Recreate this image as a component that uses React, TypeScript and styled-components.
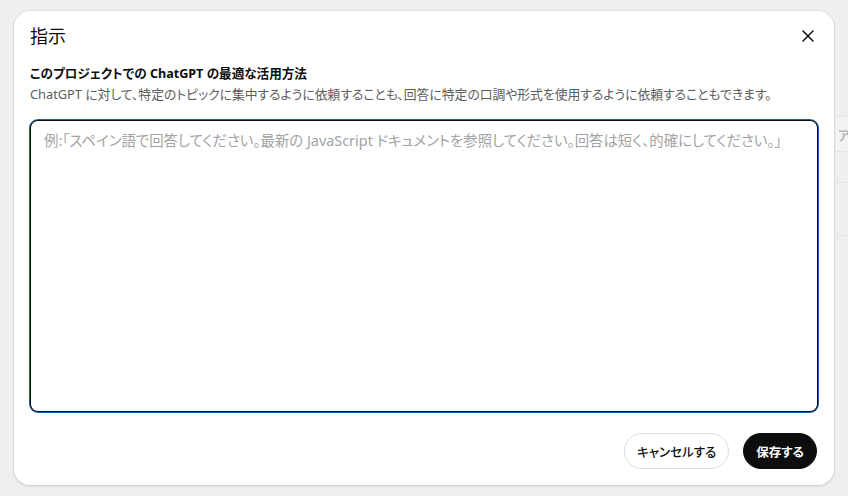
import React from 'react';
import styled, { createGlobalStyle } from 'styled-components';
import { X } from 'lucide-react';

const GlobalStyle = createGlobalStyle`
  html, body {
    margin: 0;
    padding: 0;
    background: #efefef;
  }
  body {
    font-family: 'Noto Sans', 'Noto Sans CJK JP', sans-serif;
    font-feature-settings: 'palt';
    color: #0d0d0d;
  }
`

const Backdrop = styled.div`
  position: relative;
  width: 848px;
  height: 496px;
  box-sizing: border-box;
  padding: 11px 14px;
  overflow: hidden;
`

// page content peeking out from behind the dialog
const GhostRow = styled.div`
  position: absolute;
  left: 836px;
  top: 116px;
  width: 12px;
  height: 34px;
  display: flex;
  align-items: center;
  padding-left: 2px;
  overflow: hidden;
  background: #f3f3f3;
  border-top: 1px solid #e6e6e6;
  border-bottom: 1px solid #e6e6e6;
  color: #b8b8b8;
  font-size: 13px;
  font-weight: 700;
  white-space: nowrap;
`

const GhostLine = styled.div<{ $top: number }>`
  position: absolute;
  left: 836px;
  top: ${p => p.$top}px;
  width: 14px;
  height: 1px;
  background: #e4e4e4;
`

const Dialog = styled.div`
  position: relative;
  display: flex;
  flex-direction: column;
  height: 474px;
  box-sizing: border-box;
  padding: 11px 16px 16px;
  background: #ffffff;
  border-radius: 16px;
  box-shadow: 0 1px 3px rgba(0, 0, 0, 0.14), 0 0 0 1px rgba(0, 0, 0, 0.03);
`

const Header = styled.div`
  display: flex;
  align-items: center;
  justify-content: space-between;
  height: 28px;
`

const Title = styled.h2`
  margin: 0;
  font-size: 18px;
  font-weight: 400;
  line-height: 28px;
`

const CloseButton = styled.button`
  display: flex;
  align-items: center;
  justify-content: center;
  width: 28px;
  height: 28px;
  margin-right: -4px;
  padding: 0;
  border: none;
  background: transparent;
  color: #0d0d0d;
  cursor: pointer;
`

const Label = styled.div`
  margin-top: 14px;
  font-size: 12.6px;
  font-weight: 700;
  line-height: 20px;
`

const Description = styled.div`
  font-size: 12.8px;
  line-height: 20px;
  color: #5d5d5d;
`

const Field = styled.textarea`
  flex: none;
  margin-top: 16px;
  height: 292px;
  box-sizing: border-box;
  padding: 8px 13px;
  border: 1px solid #0d0d0d;
  border-radius: 8px;
  box-shadow: 0 0 0 1px #1b5fa6;
  outline: none;
  resize: none;
  font-family: inherit;
  font-feature-settings: 'palt';
  font-size: 14.4px;
  line-height: 24px;
  color: #0d0d0d;
  caret-color: #0d0d0d;

  &::placeholder {
    color: #a3a3a3;
  }
`

const Footer = styled.div`
  display: flex;
  justify-content: flex-end;
  gap: 14px;
  margin-top: 21px;
  margin-right: 1px;
`

const Button = styled.button<{ $primary?: boolean }>`
  height: 36px;
  padding: 0 12px;
  border-radius: 999px;
  border: 1px solid ${p => (p.$primary ? '#0d0d0d' : '#dcdcdc')};
  background: ${p => (p.$primary ? '#0d0d0d' : '#ffffff')};
  color: ${p => (p.$primary ? '#ffffff' : '#0d0d0d')};
  font-family: inherit;
  font-feature-settings: 'palt';
  font-size: 12.5px;
  font-weight: ${p => (p.$primary ? 700 : 500)};
  cursor: pointer;
`

export default function App() {
  return (
    <>
      <GlobalStyle />
      <Backdrop>
        <GhostRow>アイテム</GhostRow>
        <GhostLine $top={182} />
        <GhostLine $top={235} />
        <Dialog>
          <Header>
            <Title>指示</Title>
            <CloseButton aria-label="閉じる">
              <X size={20} strokeWidth={1.8} />
            </CloseButton>
          </Header>
          <Label>このプロジェクトでの ChatGPT の最適な活用方法</Label>
          <Description>
            ChatGPT に対して、特定のトピックに集中するように依頼することも、回答に特定の口調や形式を使用するように依頼することもできます。
          </Description>
          <Field
            autoFocus
            placeholder="例:「スペイン語で回答してください。最新の JavaScript ドキュメントを参照してください。回答は短く、的確にしてください。」"
          />
          <Footer>
            <Button>キャンセルする</Button>
            <Button $primary>保存する</Button>
          </Footer>
        </Dialog>
      </Backdrop>
    </>
  )
}
